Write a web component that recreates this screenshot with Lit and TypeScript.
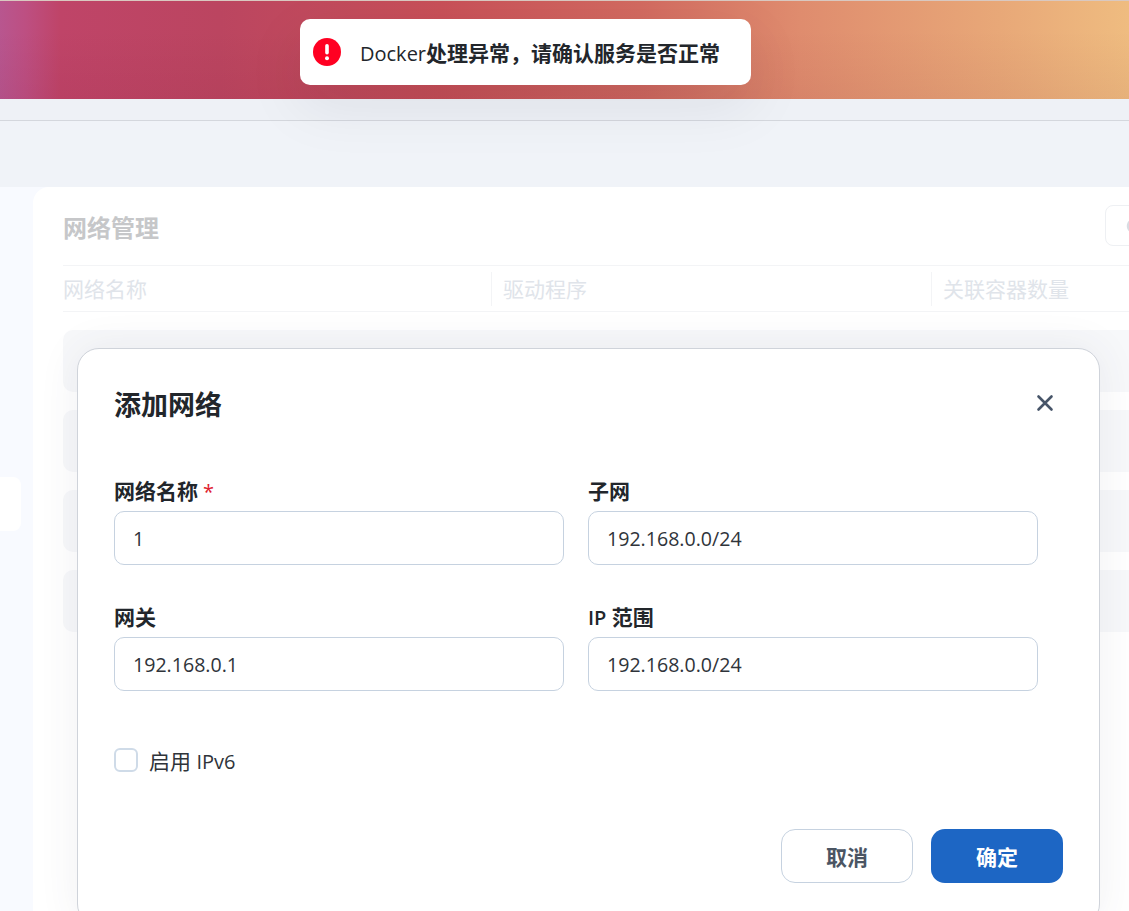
import { LitElement, html, css } from "lit";
import { customElement } from "lit/decorators.js";

@customElement("app-root")
export class AppRoot extends LitElement {
  static styles = css`
    :host {
      display: block;
      position: relative;
      width: 1129px;
      height: 911px;
      overflow: hidden;
      background: #f0f3f8;
      font-family: "Open Sans", "Noto Sans CJK SC", sans-serif;
      color: #22262b;
    }
    * { box-sizing: border-box; }
    .hero {
      height: 99px;
      border-top: 1px solid #d9c8c0;
      background:
        linear-gradient(180deg, rgba(90, 0, 30, 0) 30%, rgba(90, 0, 30, 0.06) 100%),
        linear-gradient(90deg, #b8568f 0, #bd4f82 25px, #bf4468 60px, #bb4560 220px, #c85058 440px, #d26a60 640px, #df8c6e 800px, #e8a878 1000px, #efbc80 1129px);
    }
    .strip {
      height: 22px;
      background: #eef1f6;
      border-bottom: 1px solid #d4d7dd;
    }
    .gap { height: 66px; }
    .body {
      display: flex;
      height: 724px;
      background: #f8faff;
    }
    .side {
      width: 33px;
      flex: none;
      padding-top: 290px;
    }
    .side-item {
      width: 21px;
      height: 54px;
      background: #ffffff;
      border-radius: 0 8px 8px 0;
    }
    .panel {
      flex: 1;
      min-width: 0;
      background: #ffffff;
      border-radius: 16px 0 0 0;
      padding: 18px 0 0 30px;
    }
    .panel-head {
      display: flex;
      justify-content: space-between;
      align-items: flex-start;
      height: 42px;
      margin-bottom: 18px;
    }
    .panel-title {
      font-size: 24px;
      font-weight: 700;
      color: #c6c7c9;
      line-height: 46px;
    }
    .refresh {
      width: 60px;
      height: 41px;
      margin-right: -36px;
      border: 1px solid #eef0f3;
      border-radius: 8px;
      display: flex;
      align-items: center;
      padding-left: 18px;
    }
    .thead {
      display: grid;
      grid-template-columns: 428px 440px 1fr;
      height: 47px;
      border-top: 1px solid #f3f4f6;
      border-bottom: 1px solid #f3f4f6;
      align-items: center;
      font-size: 21px;
      color: #e0e4ea;
    }
    .th { height: 34px; line-height: 34px; }
    .th + .th {
      border-left: 1px solid #f3f4f6;
      padding-left: 11px;
    }
    .rows {
      display: flex;
      flex-direction: column;
      gap: 18px;
      margin-top: 18px;
    }
    .row {
      height: 62px;
      border-radius: 10px 0 0 10px;
      background: #f7f8fa;
    }
    .toast {
      position: absolute;
      left: 300px;
      top: 19px;
      width: 451px;
      height: 66px;
      background: #ffffff;
      border-radius: 10px;
      box-shadow: 0 20px 60px rgba(20, 30, 50, 0.08);
      display: flex;
      align-items: center;
      padding-left: 13px;
      gap: 19px;
      font-size: 21px;
      font-weight: 700;
      color: #22262b;
      white-space: nowrap;
    }
    .toast svg { flex: none; display: block; }
    .latin { font-size: 20px; font-weight: 500; }
    .modal {
      position: absolute;
      left: 77px;
      top: 348px;
      width: 1023px;
      height: 578px;
      background: #ffffff;
      border: 1px solid #cfd3da;
      border-radius: 22px;
      box-shadow: 0 0 40px rgba(60, 70, 90, 0.08);
      padding: 34px 36px 0;
    }
    .modal-head {
      display: flex;
      justify-content: space-between;
      align-items: center;
      height: 40px;
    }
    .modal-title {
      font-size: 27px;
      font-weight: 700;
      color: #22262b;
    }
    .close {
      display: block;
      margin-right: 8px;
    }
    .grid {
      display: grid;
      grid-template-columns: 450px 450px;
      column-gap: 24px;
      row-gap: 40px;
      margin-top: 56px;
    }
    .field { display: flex; flex-direction: column; }
    .label {
      height: 24px;
      font-size: 21px;
      font-weight: 700;
      line-height: 24px;
      margin-bottom: 8px;
      color: #22262b;
      white-space: nowrap;
    }
    .label .latin { font-weight: 600; }
    .req {
      color: #e0202e;
      margin-left: 5px;
      font-size: 20px;
      font-weight: 400;
    }
    .input {
      height: 54px;
      border: 1px solid #c6d2e0;
      border-radius: 10px;
      padding-left: 18px;
      display: flex;
      align-items: center;
      font-size: 19.6px;
      color: #2f343a;
      background: #ffffff;
    }
    .check {
      display: flex;
      align-items: center;
      gap: 11px;
      margin-top: 57px;
      font-size: 21px;
      color: #2f343a;
      height: 24px;
    }
    .check .latin { font-weight: 400; }
    .box {
      width: 24px;
      height: 24px;
      border: 2px solid #cfdbe8;
      border-radius: 6px;
      background: #ffffff;
    }
    .actions {
      display: flex;
      justify-content: flex-end;
      gap: 18px;
      margin-top: 57px;
    }
    .btn {
      width: 132px;
      height: 54px;
      border-radius: 14px;
      display: flex;
      align-items: center;
      justify-content: center;
      font-size: 21px;
      font-weight: 700;
    }
    .ghost {
      background: #ffffff;
      border: 1px solid #c6d2e0;
      color: #4b5563;
    }
    .primary {
      background: #1d66c4;
      color: #ffffff;
    }
  `;

  private fields = [
    { label: html`网络名称<span class="req">*</span>`, value: "1" },
    { label: html`子网`, value: "192.168.0.0/24" },
    { label: html`网关`, value: "192.168.0.1" },
    { label: html`<span class="latin">IP</span> 范围`, value: "192.168.0.0/24" },
  ];

  render() {
    return html`
      <div class="hero"></div>
      <div class="strip"></div>
      <div class="gap"></div>
      <div class="body">
        <div class="side"><div class="side-item"></div></div>
        <div class="panel">
          <div class="panel-head">
            <div class="panel-title">网络管理</div>
            <div class="refresh">
              <svg width="20" height="20" viewBox="0 0 20 20" fill="none" stroke="#d8dce2" stroke-width="2.4">
                <path d="M16 10a6 6 0 1 1-2-4.5" />
              </svg>
            </div>
          </div>
          <div class="thead">
            <div class="th">网络名称</div>
            <div class="th">驱动程序</div>
            <div class="th">关联容器数量</div>
          </div>
          <div class="rows">
            <div class="row"></div>
            <div class="row"></div>
            <div class="row"></div>
            <div class="row"></div>
          </div>
        </div>
      </div>

      <div class="modal">
        <div class="modal-head">
          <div class="modal-title">添加网络</div>
          <svg class="close" width="20" height="20" viewBox="0 0 20 20" fill="none" stroke="#475569" stroke-width="2.6" stroke-linecap="round">
            <path d="M3.5 3.5 16.5 16.5M16.5 3.5 3.5 16.5" />
          </svg>
        </div>
        <div class="grid">
          ${this.fields.map(
            (f) => html`
              <div class="field">
                <div class="label">${f.label}</div>
                <div class="input">${f.value}</div>
              </div>
            `
          )}
        </div>
        <div class="check">
          <div class="box"></div>
          <span>启用 <span class="latin">IPv6</span></span>
        </div>
        <div class="actions">
          <div class="btn ghost">取消</div>
          <div class="btn primary">确定</div>
        </div>
      </div>

      <div class="toast">
        <svg width="28" height="28" viewBox="0 0 28 28">
          <circle cx="14" cy="14" r="14" fill="#ff0022" />
          <rect x="12.2" y="6" width="3.6" height="10.5" rx="1.8" fill="#fff" />
          <circle cx="14" cy="20.3" r="2" fill="#fff" />
        </svg>
        <span><span class="latin">Docker</span>处理异常，请确认服务是否正常</span>
      </div>
    `;
  }
}
